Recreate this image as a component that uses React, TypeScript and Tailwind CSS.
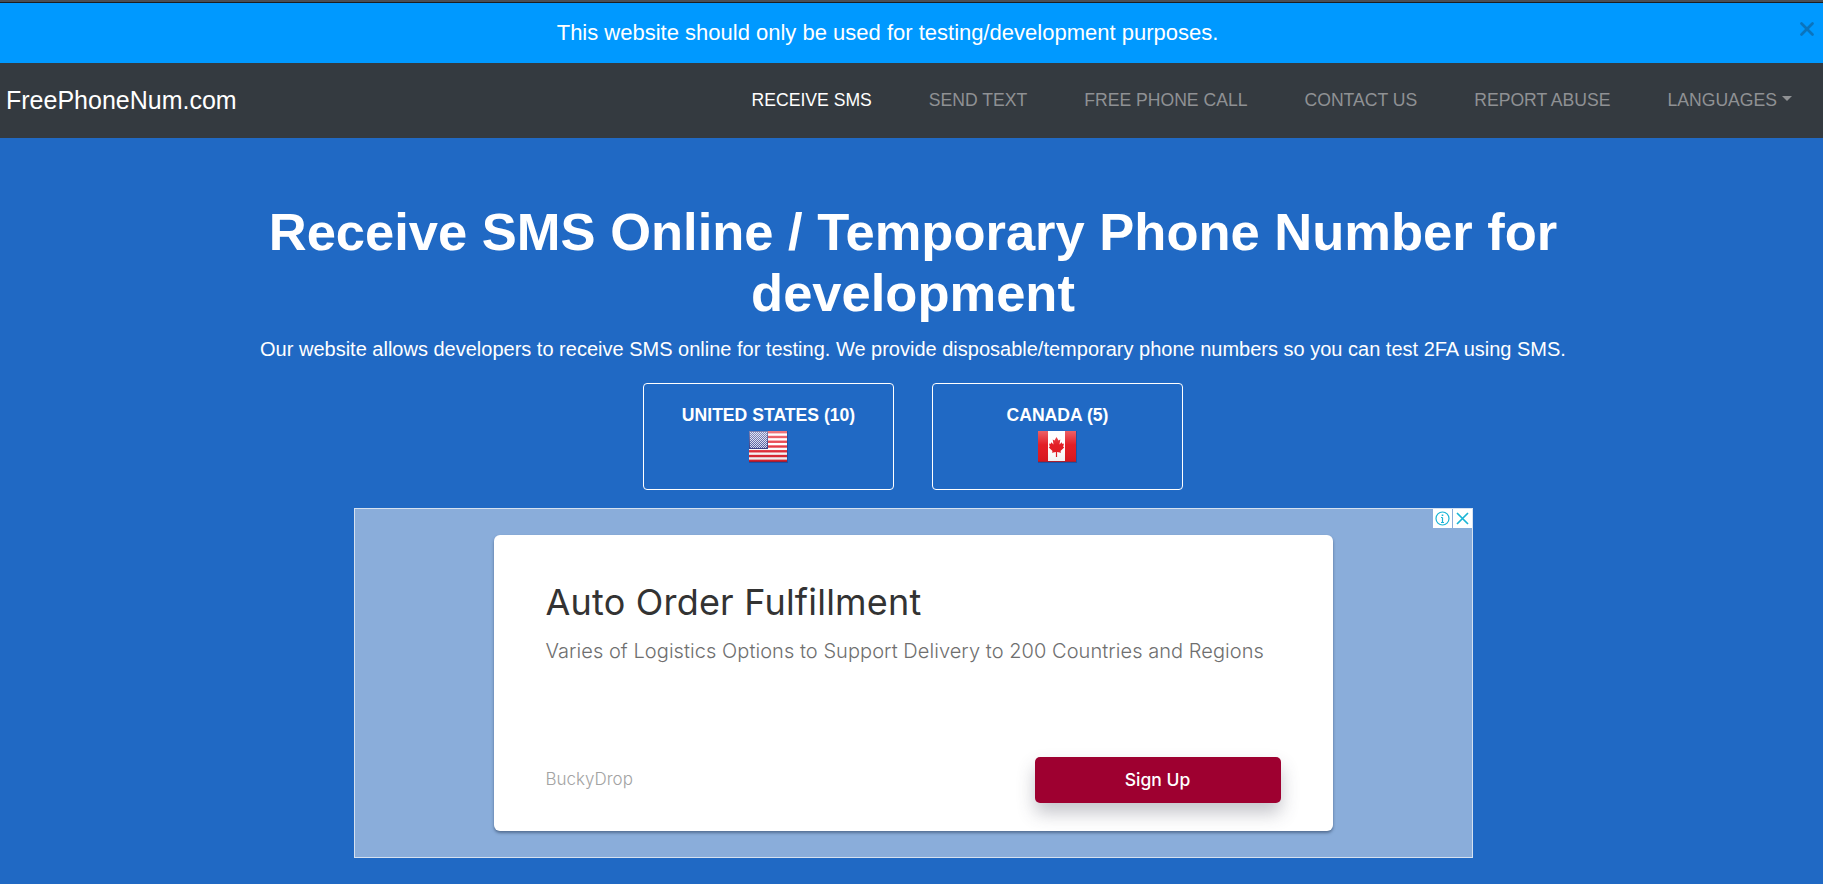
import { X } from 'lucide-react'

const links = ['RECEIVE SMS', 'SEND TEXT', 'FREE PHONE CALL', 'CONTACT US', 'REPORT ABUSE']
const stripes = [0, 2, 4, 6, 8, 10, 12]

function UsFlag() {
  return (
    <svg width="40" height="34" viewBox="0 0 40 34" className="block">
      <defs>
        <pattern id="stars" width="2" height="2" patternUnits="userSpaceOnUse">
          <rect width="2" height="2" fill="#3d4a96" />
          <rect width="1" height="1" fill="#d5d8ea" />
          <rect x="1" y="1" width="1" height="1" fill="#d5d8ea" />
        </pattern>
        <linearGradient id="usShine" x1="0" y1="0" x2="0" y2="1">
          <stop offset="0" stopColor="#fff" stopOpacity="0.4" />
          <stop offset="0.5" stopColor="#fff" stopOpacity="0.12" />
          <stop offset="1" stopColor="#000" stopOpacity="0.08" />
        </linearGradient>
      </defs>
      <rect x="0" y="2" width="39" height="32" fill="#1c3f86" opacity="0.55" />
      <rect x="0" y="2" width="38" height="31" fill="#fff" />
      {stripes.map((n) => (
        <rect key={n} x="0" y={2 + n * 2.385} width="38" height="2.385" fill="#e2202c" />
      ))}
      <rect x="0" y="2" width="19" height="18" fill="#28307e" />
      <rect x="1" y="3" width="17" height="16" fill="url(#stars)" />
      <rect x="0" y="2" width="38" height="31" fill="url(#usShine)" />
      <rect x="0" y="32" width="38" height="1" fill="#9c2038" />
    </svg>
  )
}

function CaFlag() {
  return (
    <svg width="40" height="34" viewBox="0 0 40 34" className="block">
      <defs>
        <linearGradient id="caShine" x1="0" y1="0" x2="0" y2="1">
          <stop offset="0" stopColor="#fff" stopOpacity="0.32" />
          <stop offset="0.45" stopColor="#fff" stopOpacity="0.03" />
          <stop offset="1" stopColor="#000" stopOpacity="0.06" />
        </linearGradient>
      </defs>
      <rect x="0" y="2" width="39" height="32" fill="#1c3f86" opacity="0.55" />
      <rect x="0" y="2" width="38" height="31" fill="#fff" />
      <rect x="0" y="2" width="10" height="31" fill="#e2171f" />
      <rect x="27" y="2" width="11" height="31" fill="#e2171f" />
      <polygon
        points="18.500,8 20.500,11.500 22.300,10.500 21.500,15.500 23.700,13.200 24.500,15 26,14.600 25.200,17.800 26.200,18.500 22.500,21.900 23,23.700 19.100,23 19.100,28 17.900,28 17.900,23 14,23.700 14.500,21.900 10.800,18.500 11.800,17.800 11,14.600 12.500,15 13.300,13.200 15.500,15.500 14.700,10.500 16.500,11.500"
        fill="#e2171f"
      />
      <rect x="0" y="2" width="38" height="31" fill="url(#caShine)" />
      <rect x="0" y="32" width="38" height="1" fill="#a82030" />
    </svg>
  )
}

function CountryCard({ label, children }: { label: string; children: React.ReactNode }) {
  return (
    <a className="flex h-[107px] w-[251px] flex-col items-center rounded-[4px] border border-white pt-[18px] text-[17.6px] font-bold leading-[26px] text-white">
      {label}
      <span className="mt-[1px]">{children}</span>
    </a>
  )
}

export default function App() {
  return (
    <div className="h-[884px] overflow-hidden bg-[#2069c4] font-['Liberation_Sans',Arial,sans-serif] text-white">
      <div className="h-[3px] border-b border-[#1b1e22] bg-[#4a4e54]" />

      {/* Banner */}
      <div className="relative flex h-[60px] items-center justify-center bg-[#0099ff] pb-[2px] pr-[48px] text-[22px]">
        This website should only be used for testing/development purposes.
        <X className="absolute right-[5px] top-[15px] text-[#0a74bd]" size={22} strokeWidth={3} />
      </div>

      {/* Navbar */}
      <nav className="flex h-[75px] items-center justify-between bg-[#343a40] pl-[6px] pr-[31px]">
        <span className="text-[25px] leading-none">FreePhoneNum.com</span>
        <ul className="flex items-center gap-[57px] pb-[1px] text-[17.6px] text-[#8f9194]">
          {links.map((link, i) => (
            <li key={link} className={i === 0 ? 'text-white' : ''}>
              {link}
            </li>
          ))}
          <li className="flex items-center">
            LANGUAGES
            <span className="ml-[5px] mt-[-2px] border-x-[5px] border-t-[5px] border-x-transparent border-t-[#8f9194]" />
          </li>
        </ul>
      </nav>

      {/* Hero */}
      <main className="flex flex-col items-center pl-[3px] text-center">
        <h1 className="mt-[63px] w-[1320px] text-[52.5px] font-bold leading-[61px]">
          Receive SMS Online / Temporary Phone Number for development
        </h1>
        <p className="mt-[11px] text-[20px] leading-[30px]">
          Our website allows developers to receive SMS online for testing. We provide disposable/temporary phone numbers so you can test 2FA using SMS.
        </p>

        <div className="mt-[19px] flex gap-[38px]">
          <CountryCard label="UNITED STATES (10)">
            <UsFlag />
          </CountryCard>
          <CountryCard label="CANADA (5)">
            <CaFlag />
          </CountryCard>
        </div>

        {/* Ad */}
        <div className="relative ml-[1px] mt-[18px] flex h-[350px] w-[1119px] items-center justify-center border border-[#d5e1f0] bg-[#8aadda] font-['Inter',sans-serif]">
          <div className="absolute right-0 top-0 flex gap-[1px]">
            <span className="flex h-[19px] w-[19px] items-center justify-center bg-white">
              <svg width="15" height="15" viewBox="0 0 15 15" fill="none" stroke="#1ab5d6" strokeWidth="1.2">
                <circle cx="7.500" cy="7.500" r="6.500" />
                <path d="M7.500 6.500v5M6 11.500h3M6 6.500h1.500" />
                <path d="M7.500 3.500v1.500" strokeWidth="1.600" />
              </svg>
            </span>
            <span className="flex h-[19px] w-[19px] items-center justify-center bg-white">
              <svg width="15" height="15" viewBox="0 0 15 15" fill="none" stroke="#1ab5d6" strokeWidth="1.700">
                <path d="M2 2l11 11M13 2L2 13" />
              </svg>
            </span>
          </div>

          <div className="mr-[1px] flex h-[296px] w-[839px] flex-col rounded-[6px] bg-white pb-[28px] pl-[52px] pr-[52px] pt-[45px] text-left shadow-[0_2px_3px_rgba(40,60,90,0.55)]">
            <div className="text-[36px] leading-[44px] tracking-[0.2px] text-[#333]">Auto Order Fulfillment</div>
            <div className="mt-[13px] text-[20px] font-light leading-[28px] tracking-[0.06px] text-[#6f6f6f]">
              Varies of Logistics Options to Support Delivery to 200 Countries and Regions
            </div>
            <div className="mt-auto flex items-center justify-between">
              <span className="text-[17px] font-light text-[#a3a3a3]">BuckyDrop</span>
              <span className="flex h-[46px] w-[246px] items-center justify-center rounded-[5px] bg-[#9e0030] text-[17.5px] font-medium text-white shadow-[0_10px_18px_rgba(60,60,80,0.3)]">
                Sign Up
              </span>
            </div>
          </div>
        </div>
      </main>
    </div>
  )
}
